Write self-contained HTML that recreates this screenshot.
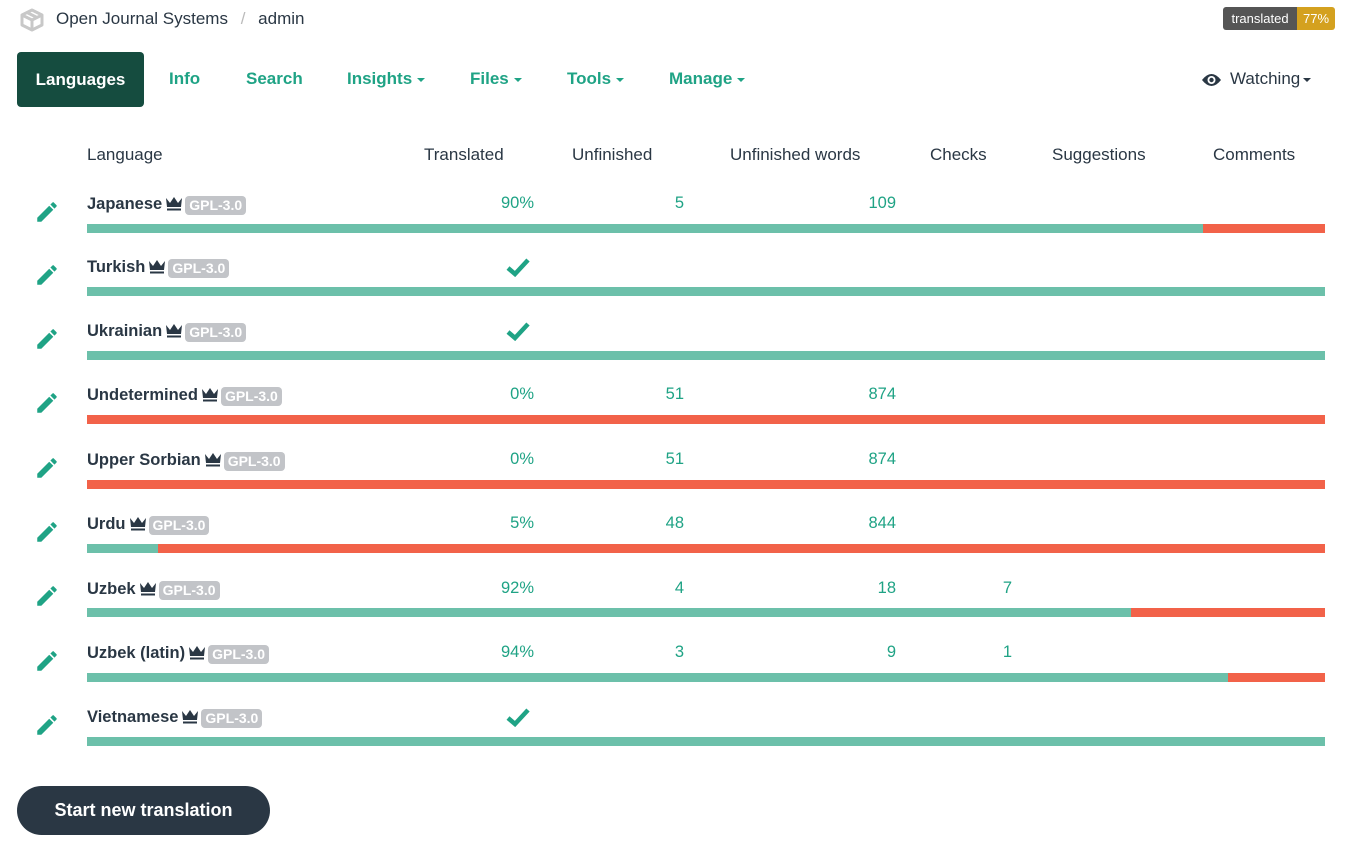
<!DOCTYPE html><html><head><meta charset="utf-8"><style>
*{margin:0;padding:0;box-sizing:border-box}
body{width:1346px;height:862px;background:#fff;font-family:"Liberation Sans",sans-serif;color:#2a3744;position:relative;overflow:hidden}
.a{position:absolute;white-space:nowrap}
.nav{top:68px;font-size:17px;font-weight:bold;color:#1fa385;line-height:22px}
.car{display:inline-block;border-left:4px solid transparent;border-right:4px solid transparent;border-top:4px solid currentColor;vertical-align:middle;margin-left:5px}
.h{top:145px;font-size:17px;color:#2a3744;line-height:20px}
.name{font-size:16.5px;font-weight:bold;line-height:24px;left:87px;color:#2a3744}
.b{display:inline-block;background:#c2c4c8;color:#fff;font-size:14px;font-weight:bold;border-radius:4px;padding:0 4px;line-height:19px;vertical-align:-1px;margin-left:2px}
.cr{display:inline-block;width:18px;height:16px;vertical-align:-2px;margin-left:3px}
.n{font-size:16.5px;color:#1fa385;text-align:right;width:80px;line-height:24px}
.bar{left:87px;width:1238px;height:9px;background:#f26249}
.bar i{display:block;height:9px;background:#6cc0aa}
</style></head><body>
<svg width="0" height="0" style="position:absolute"><defs>
<symbol id="p" viewBox="0 0 24 24"><path d="M3 17.25V21h3.75L17.81 9.94l-3.75-3.75L3 17.25zM20.71 7.04a1 1 0 0 0 0-1.41l-2.34-2.34a1 1 0 0 0-1.41 0l-1.83 1.83 3.75 3.75 1.83-1.83z" fill="#1fa385"/></symbol>
<symbol id="c" viewBox="0 0 18 16"><path d="M1 3 L5 8 L9 2 L13 8 L17 3 L16 12 L2 12 Z" fill="#2a3744"/><rect x="2" y="13.5" width="14" height="2" fill="#2a3744"/></symbol>
</defs></svg>
<svg class="a" style="left:19px;top:8px" width="26" height="24" viewBox="0 0 26 24"><path d="M13 2 L23 7 L23 17 L13 22 L3 17 L3 7 Z M3 7 L13 12 L23 7 M13 12 L13 22 M8 4.5 L18 9.5" fill="none" stroke="#c8c8c8" stroke-width="3" stroke-linejoin="round"/></svg>
<div class="a" style="left:56px;top:8px;font-size:17px;line-height:22px;color:#2a3744">Open Journal Systems <span style="color:#bbb;margin:0 8px">/</span> admin</div>
<div class="a" style="left:1223px;top:7px;height:23px;width:112px;border-radius:3px;overflow:hidden;font-size:13px;line-height:23px;color:#fff"><span style="display:inline-block;background:#555;width:74px;text-align:center">translated</span><span style="display:inline-block;background:#d4a11f;width:38px;text-align:center">77%</span></div>
<div class="a" style="left:17px;top:52px;width:127px;height:55px;background:#154c3f;border-radius:4px;color:#fff;font-size:17px;font-weight:bold;line-height:55px;text-align:center">Languages</div>
<div class="a nav" style="left:169px">Info</div>
<div class="a nav" style="left:246px">Search</div>
<div class="a nav" style="left:347px">Insights<span class="car"></span></div>
<div class="a nav" style="left:470px">Files<span class="car"></span></div>
<div class="a nav" style="left:567px">Tools<span class="car"></span></div>
<div class="a nav" style="left:669px">Manage<span class="car"></span></div>
<svg class="a" style="left:1201px;top:72px" width="21" height="16" viewBox="0 0 21 16"><path d="M1 8 Q10.5 -4 20 8 Q10.5 20 1 8Z" fill="#2a3744"/><circle cx="10.5" cy="8" r="4" fill="#fff"/><circle cx="10.5" cy="8" r="2.2" fill="#2a3744"/></svg>
<div class="a" style="left:1230px;top:68px;font-size:17px;line-height:22px;color:#2a3744">Watching<span class="car" style="margin-left:3px"></span></div>
<div class="a h" style="left:87px">Language</div>
<div class="a h" style="left:424px">Translated</div>
<div class="a h" style="left:572px">Unfinished</div>
<div class="a h" style="left:730px">Unfinished words</div>
<div class="a h" style="left:930px">Checks</div>
<div class="a h" style="left:1052px">Suggestions</div>
<div class="a h" style="left:1213px">Comments</div>

<div class="a name" style="top:192px">Japanese<svg class="cr"><use href="#c"/></svg><span class="b">GPL-3.0</span></div>
<div class="a n" style="left:454px;top:191px">90%</div><div class="a n" style="left:604px;top:191px">5</div><div class="a n" style="left:816px;top:191px">109</div>
<div class="a bar" style="top:224px"><i style="width:1116px"></i></div>

<div class="a name" style="top:255px">Turkish<svg class="cr"><use href="#c"/></svg><span class="b">GPL-3.0</span></div>
<div class="a bar" style="top:287px"><i style="width:100%"></i></div>

<div class="a name" style="top:319px">Ukrainian<svg class="cr"><use href="#c"/></svg><span class="b">GPL-3.0</span></div>
<div class="a bar" style="top:351px"><i style="width:100%"></i></div>

<div class="a name" style="top:383px">Undetermined<svg class="cr"><use href="#c"/></svg><span class="b">GPL-3.0</span></div>
<div class="a n" style="left:454px;top:382px">0%</div><div class="a n" style="left:604px;top:382px">51</div><div class="a n" style="left:816px;top:382px">874</div>
<div class="a bar" style="top:415px"></div>

<div class="a name" style="top:448px">Upper Sorbian<svg class="cr"><use href="#c"/></svg><span class="b">GPL-3.0</span></div>
<div class="a n" style="left:454px;top:447px">0%</div><div class="a n" style="left:604px;top:447px">51</div><div class="a n" style="left:816px;top:447px">874</div>
<div class="a bar" style="top:480px"></div>

<div class="a name" style="top:512px">Urdu<svg class="cr"><use href="#c"/></svg><span class="b">GPL-3.0</span></div>
<div class="a n" style="left:454px;top:511px">5%</div><div class="a n" style="left:604px;top:511px">48</div><div class="a n" style="left:816px;top:511px">844</div>
<div class="a bar" style="top:544px"><i style="width:71px"></i></div>

<div class="a name" style="top:577px">Uzbek<svg class="cr"><use href="#c"/></svg><span class="b">GPL-3.0</span></div>
<div class="a n" style="left:454px;top:576px">92%</div><div class="a n" style="left:604px;top:576px">4</div><div class="a n" style="left:816px;top:576px">18</div><div class="a n" style="left:932px;top:576px">7</div>
<div class="a bar" style="top:608px"><i style="width:1044px"></i></div>

<div class="a name" style="top:641px">Uzbek (latin)<svg class="cr"><use href="#c"/></svg><span class="b">GPL-3.0</span></div>
<div class="a n" style="left:454px;top:640px">94%</div><div class="a n" style="left:604px;top:640px">3</div><div class="a n" style="left:816px;top:640px">9</div><div class="a n" style="left:932px;top:640px">1</div>
<div class="a bar" style="top:673px"><i style="width:1141px"></i></div>

<div class="a name" style="top:705px">Vietnamese<svg class="cr"><use href="#c"/></svg><span class="b">GPL-3.0</span></div>
<div class="a bar" style="top:737px"><i style="width:100%"></i></div>

<svg class="a" style="left:506px;top:257px" width="24" height="20" viewBox="0 0 24 20"><path d="M2 11 L9 17 L22 3" fill="none" stroke="#1fa385" stroke-width="4.5"/></svg>
<svg class="a" style="left:506px;top:321px" width="24" height="20" viewBox="0 0 24 20"><path d="M2 11 L9 17 L22 3" fill="none" stroke="#1fa385" stroke-width="4.5"/></svg>
<svg class="a" style="left:506px;top:707px" width="24" height="20" viewBox="0 0 24 20"><path d="M2 11 L9 17 L22 3" fill="none" stroke="#1fa385" stroke-width="4.5"/></svg>

<svg class="a" style="left:34px;top:199px" width="26" height="26"><use href="#p"/></svg>
<svg class="a" style="left:34px;top:262px" width="26" height="26"><use href="#p"/></svg>
<svg class="a" style="left:34px;top:326px" width="26" height="26"><use href="#p"/></svg>
<svg class="a" style="left:34px;top:390px" width="26" height="26"><use href="#p"/></svg>
<svg class="a" style="left:34px;top:455px" width="26" height="26"><use href="#p"/></svg>
<svg class="a" style="left:34px;top:519px" width="26" height="26"><use href="#p"/></svg>
<svg class="a" style="left:34px;top:583px" width="26" height="26"><use href="#p"/></svg>
<svg class="a" style="left:34px;top:648px" width="26" height="26"><use href="#p"/></svg>
<svg class="a" style="left:34px;top:712px" width="26" height="26"><use href="#p"/></svg>

<div class="a" style="left:17px;top:786px;width:253px;height:49px;border-radius:25px;background:#2a3744;color:#fff;font-size:18px;font-weight:bold;line-height:49px;text-align:center">Start new translation</div>
</body></html>
